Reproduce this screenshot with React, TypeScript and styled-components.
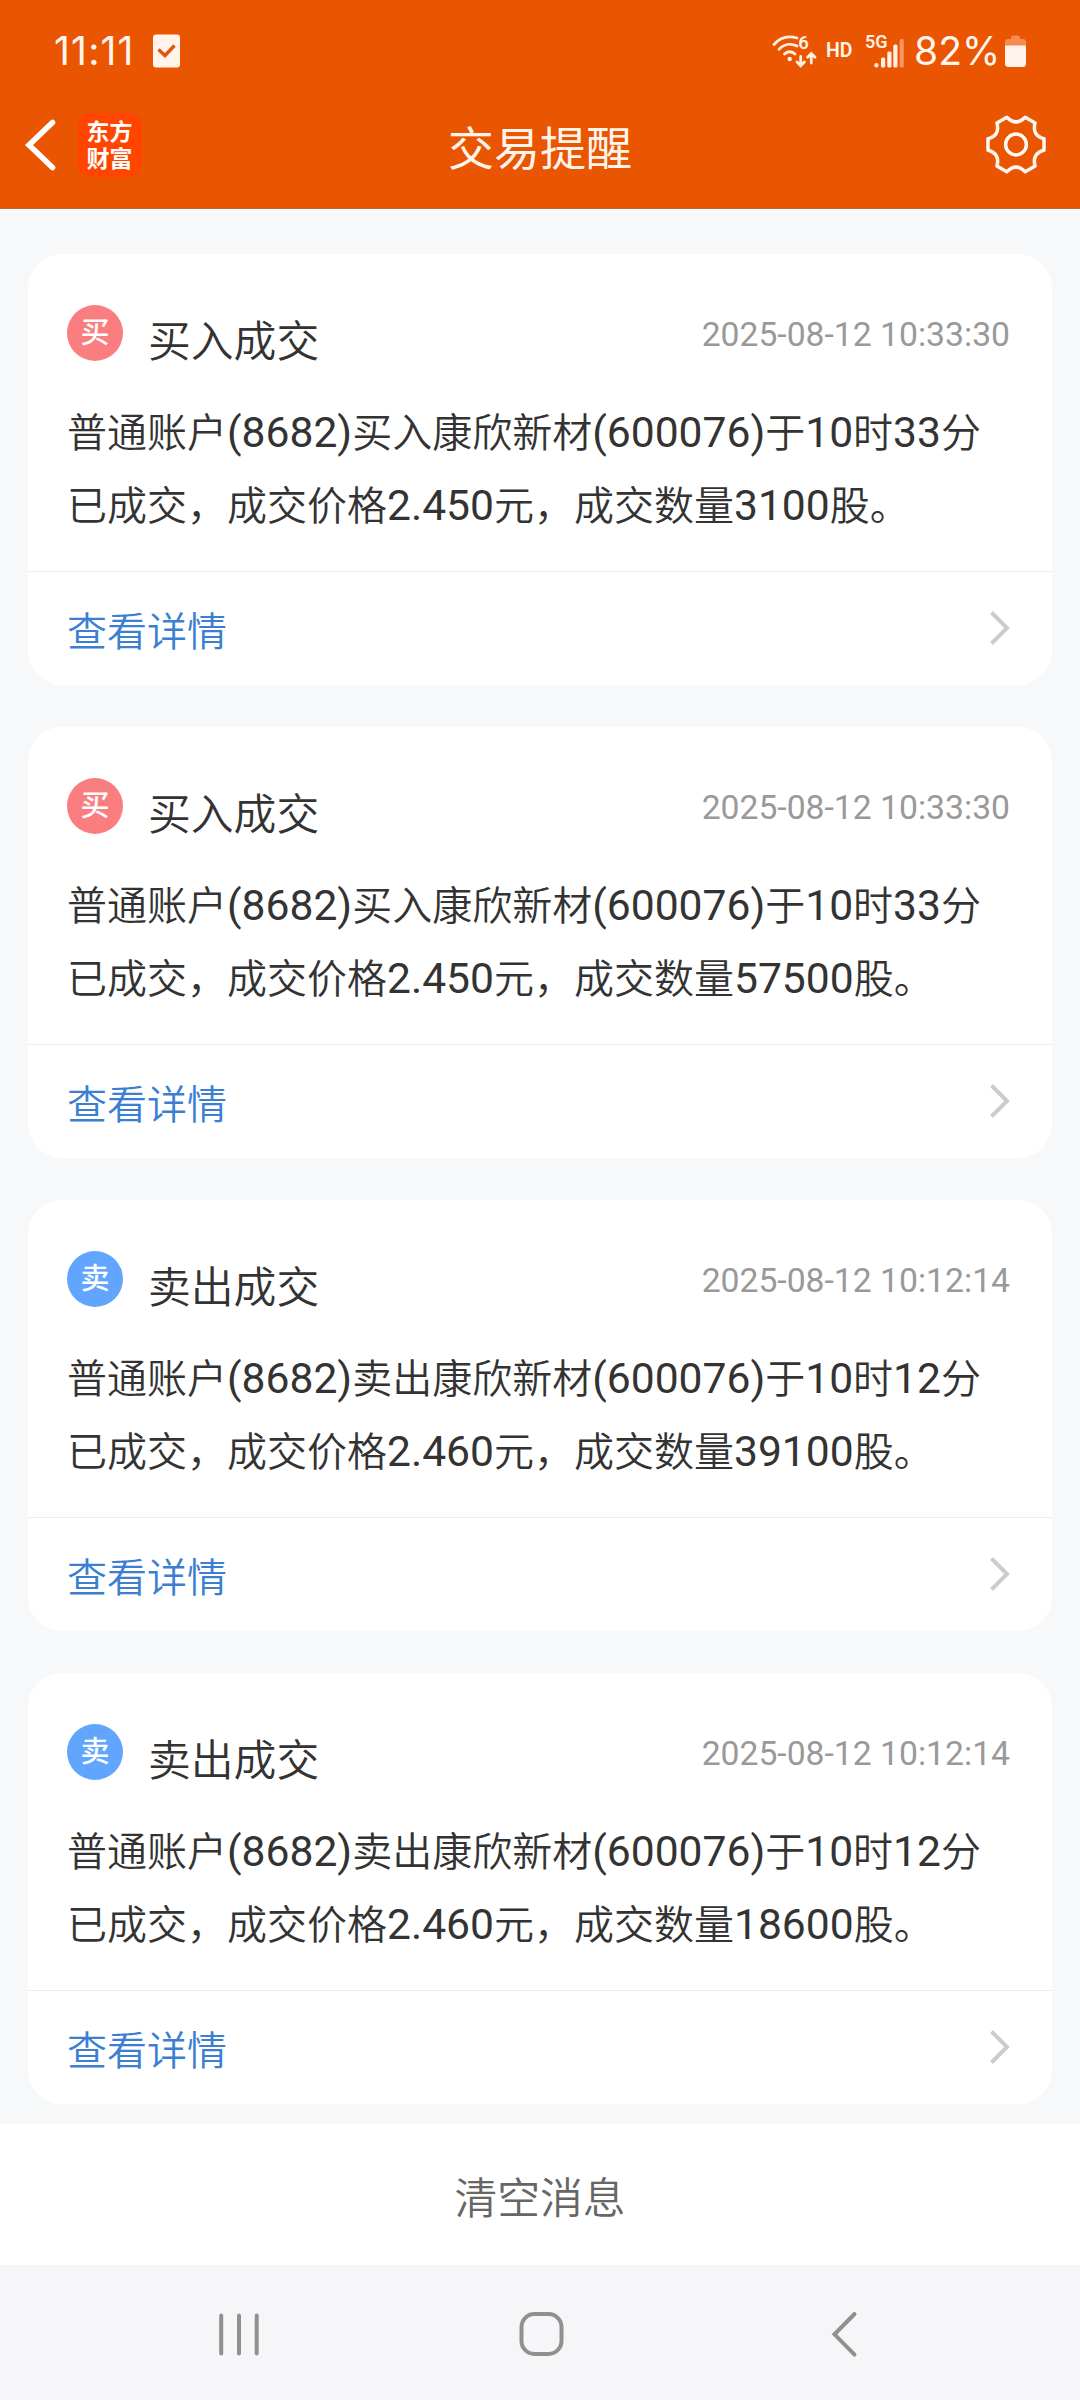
import React from "react";
import styled, { createGlobalStyle } from "styled-components";

const GlobalStyle = createGlobalStyle`
  body {
    margin: 0;
    background: #f7f8fa;
    font-family: Roboto, "Noto Sans CJK SC", sans-serif;
    color: #333333;
  }
`;

const Screen = styled.div`
  width: 1080px;
  height: 2400px;
  display: flex;
  flex-direction: column;
  overflow: hidden;
  background: #f7f8fa;
`;

const Header = styled.header`
  height: 209px;
  box-sizing: border-box;
  flex-shrink: 0;
  background: #ea5502;
  border-bottom: 1px solid #b5683a;
  color: #fff5ec;
`;

const StatusBar = styled.div`
  height: 102px;
  box-sizing: border-box;
  padding: 0 54px 0 54px;
  display: flex;
  align-items: center;
  justify-content: space-between;
`;

const StatusGroup = styled.div`
  display: flex;
  align-items: center;
`;

const StatusText = styled.span<{ $width: number; $spacing?: number }>`
  width: ${({ $width }) => $width}px;
  font-family: Inter, sans-serif;
  font-size: 39px;
  line-height: 46px;
  letter-spacing: ${({ $spacing = 0 }) => $spacing}px;
  white-space: nowrap;
`;

const HdMark = styled.span`
  width: 39px;
  margin-left: 8px;
  font-size: 19.5px;
  font-weight: 600;
  line-height: 34px;
`;

const AppBar = styled.div`
  height: 86px;
  box-sizing: border-box;
  padding: 0 34px 0 24px;
  display: grid;
  grid-template-columns: 300px 1fr 300px;
  align-items: center;
`;

const AppBarLeft = styled.div`
  display: flex;
  align-items: center;
  gap: 22px;
`;

const AppBarRight = styled.div`
  display: flex;
  justify-content: flex-end;
`;

const PageTitle = styled.h1`
  margin: 0;
  padding: 8px 0 0 10px;
  text-align: center;
  font-size: 46px;
  font-weight: 400;
  line-height: 60px;
`;

const Logo = styled.div`
  width: 64px;
  height: 64px;
  box-sizing: border-box;
  padding: 6px 1px 0 0;
  border-radius: 13px;
  background: #ff4500;
  color: #ffffff;
  text-align: center;
  font-size: 23px;
  font-weight: 700;
  line-height: 27px;
`;

const List = styled.main`
  flex: 1;
  min-height: 0;
  padding: 45px 28px 0;
  display: flex;
  flex-direction: column;
  gap: 42px;
`;

const Card = styled.article`
  height: 431px;
  flex-shrink: 0;
  border-radius: 34px;
  background: #ffffff;
  overflow: hidden;
`;

const CardBody = styled.div`
  height: 317px;
  box-sizing: border-box;
  padding: 51px 42px 0 39px;
`;

const CardHead = styled.div`
  height: 56px;
  display: flex;
  align-items: center;
`;

const Badge = styled.span<{ $side: Side }>`
  width: 56px;
  height: 56px;
  border-radius: 50%;
  background: ${({ $side }) => ($side === "buy" ? "#fa7d80" : "#61a5ff")};
  color: #ffffff;
  text-align: center;
  font-size: 29px;
  font-weight: 500;
  line-height: 57px;
`;

const CardTitle = styled.h2`
  flex: 1;
  margin: 0;
  padding: 18px 0 0 25px;
  font-size: 42.8px;
  font-weight: 350;
  line-height: 56px;
`;

const Time = styled.time`
  padding-top: 3px;
  font-size: 33.7px;
  line-height: 40px;
  color: #999999;
`;

const Message = styled.p`
  margin: 36px 0 0;
  font-size: 40px;
  font-weight: 350;
  line-height: 73px;
  white-space: nowrap;
`;

const Latin = styled.span`
  font-size: 42.6px;
  font-weight: 400;
  line-height: 1;
`;

const DetailLink = styled.div`
  height: 114px;
  box-sizing: border-box;
  padding: 0 41px 0 39px;
  border-top: 1px solid #eeeeee;
  display: flex;
  align-items: center;
  justify-content: space-between;
  font-size: 40px;
  font-weight: 350;
  color: #3c7fd2;
`;

const ClearButton = styled.button`
  height: 141px;
  flex-shrink: 0;
  border: 0;
  padding: 1px 0 0;
  background: #ffffff;
  color: #666666;
  font-family: inherit;
  font-size: 42.8px;
  font-weight: 350;
`;

const NavBar = styled.nav`
  height: 135px;
  flex-shrink: 0;
  box-sizing: border-box;
  padding: 0 211px 0 214px;
  display: flex;
  align-items: center;
  justify-content: space-between;
  background: #f6f6f9;
`;

type Side = "buy" | "sell";

interface Trade {
  side: Side;
  time: string;
  lines: string[];
}

const trades: Trade[] = [
  {
    side: "buy",
    time: "2025-08-12 10:33:30",
    lines: ["普通账户(8682)买入康欣新材(600076)于10时33分", "已成交，成交价格2.450元，成交数量3100股。"],
  },
  {
    side: "buy",
    time: "2025-08-12 10:33:30",
    lines: ["普通账户(8682)买入康欣新材(600076)于10时33分", "已成交，成交价格2.450元，成交数量57500股。"],
  },
  {
    side: "sell",
    time: "2025-08-12 10:12:14",
    lines: ["普通账户(8682)卖出康欣新材(600076)于10时12分", "已成交，成交价格2.460元，成交数量39100股。"],
  },
  {
    side: "sell",
    time: "2025-08-12 10:12:14",
    lines: ["普通账户(8682)卖出康欣新材(600076)于10时12分", "已成交，成交价格2.460元，成交数量18600股。"],
  },
];

// Digits and brackets are set slightly larger than the Chinese text
const renderLine = (line: string) =>
  line
    .split(/([\d().]+)/)
    .map((part, i) => (i % 2 ? <Latin key={i}>{part}</Latin> : part));

const TaskIcon = () => (
  <svg width="27" height="34" viewBox="0 0 27 34" fill="none">
    <rect y="0.5" width="27" height="33" rx="3" fill="#fff3ec" />
    <path d="M5.5 15.5 12 21.5 21.5 11.5" stroke="#e0560f" strokeWidth="3.4" />
  </svg>
);

const WifiIcon = () => (
  <svg width="46" height="40" viewBox="0 -3 46 40" fill="none" stroke="#fff0e2" strokeWidth="2.8" strokeLinecap="round">
    <path d="M2 10.5C8 3.5 16 1.5 25 4" />
    <path d="M7 15.2C12 10 19 9 25 12" />
    <path d="M12.5 20C15.5 17 20 17 23 20" />
    <circle cx="17.7" cy="25" r="2.2" fill="#fff0e2" stroke="none" />
    <path d="M28.7 22.5V31M25 28l3.7 3.7L32.4 28" />
    <path d="M39.3 29V20M35.6 23.3l3.7-3.7 3.7 3.7" />
    <text x="26.3" y="15" fill="#fff0e2" stroke="none" fontFamily="Roboto" fontSize="18.5" fontWeight="600">6</text>
  </svg>
);

const SignalSvg = styled.svg`
  margin-right: 9px;
`;

const SignalIcon = () => (
  <SignalSvg width="40" height="42" viewBox="0 -3 40 42" fill="#fff0e2">
    <text x="0" y="14.7" fontFamily="Roboto" fontSize="18" fontWeight="600">5G</text>
    <rect x="9.3" y="30" width="4.2" height="4.5" rx="2" />
    <rect x="16" y="24.5" width="4.2" height="10" rx="1.5" />
    <rect x="22.3" y="18.5" width="4.2" height="16" rx="1.5" />
    <rect x="28.3" y="11.5" width="4.2" height="23" rx="1.5" />
    <rect x="34.6" y="6" width="4.2" height="28.5" rx="1.5" fill="#f99560" />
  </SignalSvg>
);

const BatteryIcon = () => (
  <svg width="21" height="34" viewBox="0 0 21 34">
    <path d="M6 5V3.5Q6 1.5 8 1.5H13Q15 1.5 15 3.5V5H18Q21 5 21 8V12H0V8Q0 5 3 5Z" fill="#f68a50" />
    <path d="M0 11.5H21V29.5Q21 33 17.5 33H3.5Q0 33 0 29.5Z" fill="#fff3ec" />
  </svg>
);

const BackIcon = () => (
  <svg width="32" height="56" viewBox="0 0 32 56" fill="none">
    <path d="M28.5 5.5 5 28 28.5 50.5" stroke="#ffffff" strokeWidth="5.6" strokeLinecap="round" />
  </svg>
);

const GearIcon = () => (
  <svg width="60" height="60" viewBox="-30 -29.5 60 60" fill="none" stroke="#fff8f0" strokeWidth="3.5" strokeLinejoin="round">
    <path d="M28-5.7V5.7Q15.7 9 19.1 21.6L9.2 27.3Q0 18.1-9.2 27.3L-19.1 21.6Q-15.7 9-28 5.7V-5.7Q-15.7-9-19.1-21.6L-9.2-27.3Q0-18.1 9.2-27.3L19.1-21.6Q15.7-9 28-5.7Z" />
    <circle r="10.4" />
  </svg>
);

const ChevronIcon = () => (
  <svg width="22" height="36" viewBox="0 1 22 36" fill="none">
    <path d="M2.5 2.5 18 18 2.5 33.5" stroke="#cccccc" strokeWidth="4" />
  </svg>
);

const RecentsIcon = () => (
  <svg width="50" height="50" viewBox="0 0 50 50" fill="none" stroke="#909090" strokeWidth="4" strokeLinecap="round">
    <path d="M7.2 7.5V45.5M25 7.5V45.5M42.7 7.5V45.5" />
  </svg>
);

const HomeIcon = () => (
  <svg width="50" height="50" viewBox="0 0 50 50" fill="none" stroke="#909090" strokeWidth="4">
    <rect x="4.5" y="6" width="40" height="40" rx="13" />
  </svg>
);

const NavBackIcon = () => (
  <svg width="50" height="50" viewBox="0 0 50 50" fill="none" stroke="#909090" strokeWidth="4" strokeLinecap="round">
    <path d="M35.5 6 15.5 26.3 35.5 46.6" />
  </svg>
);

const TradeCard: React.FunctionComponent<{ trade: Trade }> = ({ trade }) => (
  <Card>
    <CardBody>
      <CardHead>
        <Badge $side={trade.side}>{trade.side === "buy" ? "买" : "卖"}</Badge>
        <CardTitle>{trade.side === "buy" ? "买入成交" : "卖出成交"}</CardTitle>
        <Time>{trade.time}</Time>
      </CardHead>
      <Message>
        {renderLine(trade.lines[0])}
        <br />
        {renderLine(trade.lines[1])}
      </Message>
    </CardBody>
    <DetailLink>
      查看详情
      <ChevronIcon />
    </DetailLink>
  </Card>
);

const App: React.FunctionComponent = () => {
  return (
    <Screen lang="zh-CN">
      <GlobalStyle />
      <Header>
        <StatusBar>
          <StatusGroup>
            <StatusText $width={99} $spacing={1.2}>11:11</StatusText>
            <TaskIcon />
          </StatusGroup>
          <StatusGroup>
            <WifiIcon />
            <HdMark>HD</HdMark>
            <SignalIcon />
            <StatusText $width={91}>82%</StatusText>
            <BatteryIcon />
          </StatusGroup>
        </StatusBar>
        <AppBar>
          <AppBarLeft>
            <BackIcon />
            <Logo>
              东方
              <br />
              财富
            </Logo>
          </AppBarLeft>
          <PageTitle>交易提醒</PageTitle>
          <AppBarRight>
            <GearIcon />
          </AppBarRight>
        </AppBar>
      </Header>
      <List>
        {trades.map((trade, i) => (
          <TradeCard key={i} trade={trade} />
        ))}
      </List>
      <ClearButton>清空消息</ClearButton>
      <NavBar>
        <RecentsIcon />
        <HomeIcon />
        <NavBackIcon />
      </NavBar>
    </Screen>
  );
};

export default App;
